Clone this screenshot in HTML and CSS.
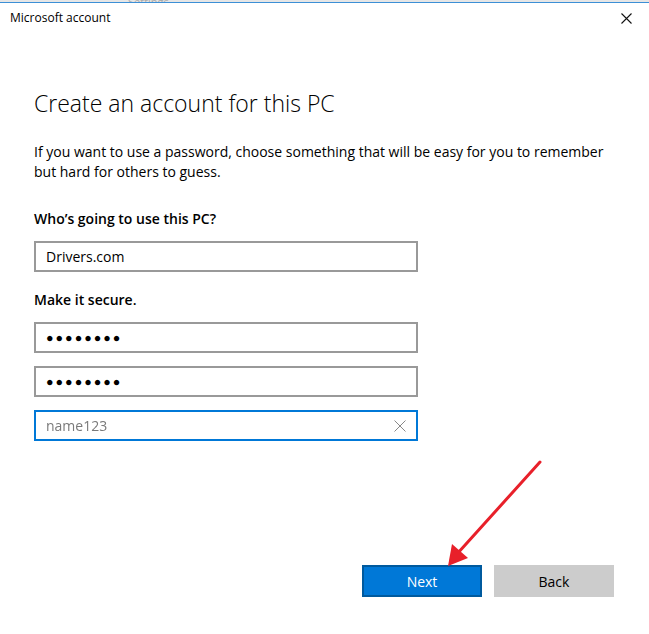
FILE: index.html
```html
<!DOCTYPE html>
<html lang="en">

<head>
  <meta charset="UTF-8">
  <title>Microsoft account</title>
  <link rel="stylesheet" href="styles.css">
</head>

<body>
  <!-- the Settings window peeking out behind the dialog -->
  <div class="behind"><span>Settings</span></div>

  <div class="dialog">
    <div class="titlebar">
      <span class="title">Microsoft account</span>
      <span class="close">
        <svg width="11" height="11" viewBox="0 0 11 11">
          <path d="M0.5 0.5L10.5 10.5M10.5 0.5L0.5 10.5" stroke="#111" stroke-width="1.1" />
        </svg>
      </span>
    </div>

    <div class="content">
      <h1>Create an account for this PC</h1>
      <p class="intro">If you want to use a password, choose something that will be easy for you to remember but hard for others to guess.</p>

      <label class="label">Who’s going to use this PC?</label>
      <div class="field">Drivers.com</div>

      <label class="label secure">Make it secure.</label>
      <div class="field dots">●●●●●●●●</div>
      <div class="field dots">●●●●●●●●</div>
      <div class="field focused">
        <span class="hint">name123</span>
        <svg class="clear" width="12" height="12" viewBox="0 0 12 12">
          <path d="M0.5 0.5L11.5 11.5M11.5 0.5L0.5 11.5" stroke="#888" stroke-width="1" />
        </svg>
      </div>
    </div>

    <div class="actions">
      <button class="btn primary">Next</button>
      <button class="btn">Back</button>
    </div>

    <!-- red pointer drawn on top of the dialog -->
    <svg class="arrow" width="110" height="120" viewBox="0 0 110 120">
      <path d="M100 2L17 94" stroke="#e8202a" stroke-width="3" stroke-linecap="round" />
      <path d="M8 106L12 84L28 98Z" fill="#e8202a" />
    </svg>
  </div>
</body>

</html>
```

FILE: styles.css
```css
html,
body {
  margin: 0;
  background: white;
}

body {
  font-family: "Open Sans", "Noto Sans", sans-serif;
  color: #000;
  position: relative;
  width: 649px;
  height: 634px;
  overflow: hidden;
}

.behind {
  height: 2px;
  background: #e6e6e6;
  overflow: hidden;
  font-size: 11px;
  color: #aaa;
  padding-left: 128px;
  line-height: 4px;
}

.dialog {
  border-top: 1px solid #3c8fd6;
}

.titlebar {
  display: flex;
  justify-content: space-between;
  align-items: center;
  height: 30px;
  padding: 0 17px 0 10px;
}

.title {
  font-size: 12px;
  margin-top: -2px;
}

.close {
  display: flex;
}

.content {
  padding: 55px 0 0 34px;
}

h1 {
  margin: 0;
  font-weight: 300;
  font-size: 23px;
  line-height: 30px;
  color: #000;
}

.intro {
  margin: 24px 0 0;
  width: 590px;
  font-size: 14px;
  line-height: 20px;
  color: #000;
}

.label {
  display: block;
  margin-top: 27px;
  font-size: 14px;
  font-weight: 600;
  line-height: 20px;
}

.label.secure {
  margin-top: 18px;
}

.field {
  box-sizing: border-box;
  width: 384px;
  height: 31px;
  margin-top: 12px;
  border: 2px solid #999;
  padding: 0 10px;
  display: flex;
  align-items: center;
  font-size: 14px;
}

.field.dots {
  font-size: 12.5px;
  letter-spacing: 2px;
}

.dots + .dots,
.dots + .focused {
  margin-top: 13px;
}

.field.focused {
  border-color: #0078d7;
  justify-content: space-between;
  padding-right: 10px;
}

.hint {
  color: #7a7a7a;
  filter: blur(0.7px);
  font-size: 14px;
}

.actions {
  display: flex;
  justify-content: flex-end;
  gap: 12px;
  padding: 124px 35px 0 0;
}

.btn {
  box-sizing: border-box;
  width: 120px;
  height: 32px;
  border: 2px solid #ccc;
  background: #ccc;
  font-family: inherit;
  font-size: 14px;
  color: #000;
  padding: 0;
}

.btn.primary {
  background: #0078d7;
  border-color: #005a9e;
  color: white;
}

.arrow {
  position: absolute;
  left: 440px;
  top: 460px;
}
```
